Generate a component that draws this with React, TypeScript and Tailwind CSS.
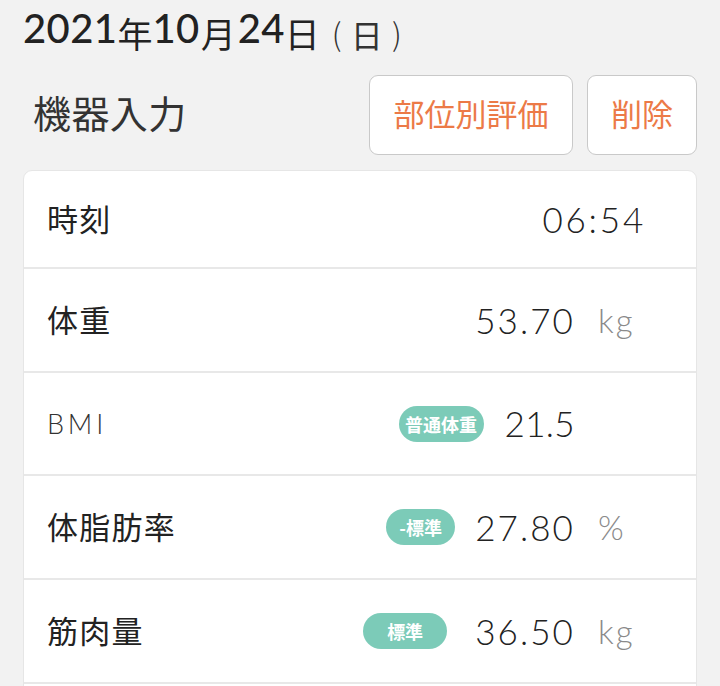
import React from "react";

type Row = {
  label: string;
  value: string;
  unit?: string;
  badge?: string;
  badgeCls?: string;
  latin?: boolean;
  time?: boolean;
  numCls?: string;
  h: string;
};

const rows: Row[] = [
  { label: "時刻", value: "06:54", time: true, h: "h-[98px]" },
  { label: "体重", value: "53.70", unit: "kg", h: "h-[104px]" },
  {
    label: "BMI",
    value: "21.5",
    badge: "普通体重",
    badgeCls: "w-[85px] mr-[21px]",
    numCls: "tracking-[0.01em]",
    latin: true,
    h: "h-[103px]",
  },
  { label: "体脂肪率", value: "27.80", unit: "%", badge: "-標準", badgeCls: "w-[69px] mr-[20px]", h: "h-[104px]" },
  { label: "筋肉量", value: "36.50", unit: "kg", badge: "標準", badgeCls: "w-[84px] mr-[28px]", h: "h-[104px]" },
];

export default function App() {
  return (
    <div className="h-[686px] w-[720px] overflow-hidden bg-[#f2f2f2] px-[23px] font-['Noto_Sans_CJK_JP','Noto_Sans',sans-serif]">
      <div className="flex h-[50px] items-end text-[#222]">
        <span className="pb-[2px] font-['Lato',sans-serif] text-[40px] font-medium leading-none tracking-[0.01em]">2021</span>
        <span className="text-[35px] leading-none">年</span>
        <span className="pb-[2px] font-['Lato',sans-serif] text-[40px] font-medium leading-none tracking-[0.01em]">10</span>
        <span className="ml-[1px] text-[35px] leading-none">月</span>
        <span className="ml-[2px] pb-[2px] font-['Lato',sans-serif] text-[40px] font-medium leading-none tracking-[0.01em]">24</span>
        <span className="text-[35px] leading-none">日</span>
        <span className="ml-[12px] flex items-end text-[#333]">
          <span className="w-[14px] pb-[2px] text-[31px] font-light leading-none">(</span>
          <span className="mx-[5px] text-[32px] leading-none">日</span>
          <span className="w-[14px] pb-[2px] text-right text-[31px] font-light leading-none">)</span>
        </span>
      </div>

      <div className="mt-[25px] flex items-center">
        <div className="ml-[10px] flex-1 pb-[6px] text-[38px] leading-none tracking-[0.01em] text-[#333]">機器入力</div>
        <button className="flex h-[80px] w-[204px] items-center justify-center rounded-[9px] border border-[#c9c9c9] bg-white pb-[4px] text-[31px] text-[#ec7a47]">
          部位別評価
        </button>
        <button className="ml-[14px] flex h-[80px] w-[110px] items-center justify-center rounded-[9px] border border-[#c9c9c9] bg-white pb-[4px] text-[31px] text-[#ec7a47]">
          削除
        </button>
      </div>

      <div className="mt-[15px] overflow-hidden rounded-t-[9px] border border-[#e6e6e6] bg-white">
        {rows.map((r, i) => (
          <div key={i} className={`flex items-center border-b-2 border-[#e8e8e8] pl-[23px] pr-[50px] ${r.h}`}>
            {r.latin ? (
              <div className="flex-1 font-['Lato',sans-serif] text-[27px] font-light leading-none tracking-[0.14em] text-[#333]">
                {r.label}
              </div>
            ) : (
              <div className="flex-1 pb-[4px] text-[31px] leading-none tracking-[0.04em] text-[#222]">{r.label}</div>
            )}
            {r.time ? (
              <div className="font-['Lato',sans-serif] text-[35px] font-light leading-none tracking-[0.08em] text-[#222]">
                {r.value}
              </div>
            ) : (
              <div className="flex items-center">
                {r.badge && (
                  <span
                    className={`inline-flex h-[36px] items-center justify-center rounded-full bg-[#7ccbb8] text-[18px] font-bold leading-none text-white ${r.badgeCls}`}
                  >
                    {r.badge}
                  </span>
                )}
                <div
                  className={`font-['Lato',sans-serif] text-[35px] font-light leading-none text-[#222] ${r.numCls ?? "tracking-[0.06em]"}`}
                >
                  {r.value}
                </div>
                <div className="ml-[23px] w-[48px] font-['Lato',sans-serif] text-[33px] font-light leading-none tracking-[0.06em] text-[#8a8a8a]">
                  {r.unit}
                </div>
              </div>
            )}
          </div>
        ))}
        <div className="h-[20px]" />
      </div>
    </div>
  );
}
